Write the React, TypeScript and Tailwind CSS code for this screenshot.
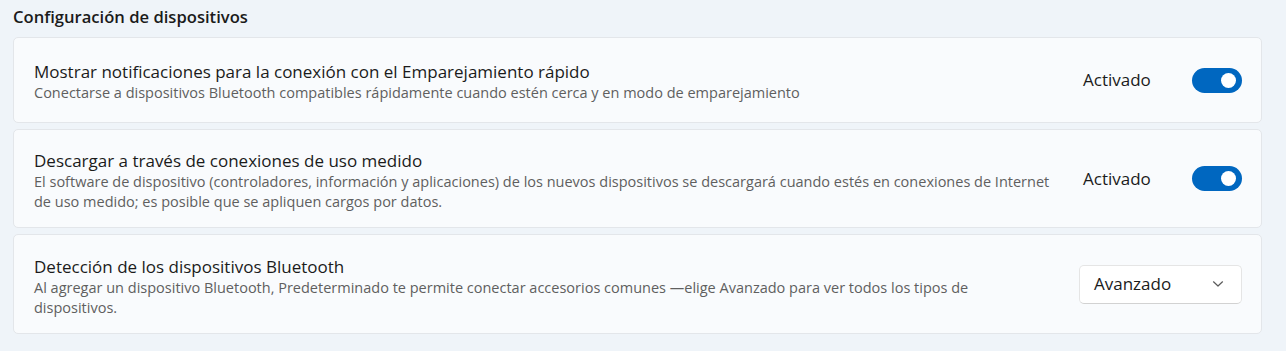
import React from 'react';

const Toggle: React.FC = () => (
    <div className="flex items-center justify-end w-[50px] h-[25px] rounded-full bg-[#0067c0] pr-[6px]">
        <div className="w-[15px] h-[15px] rounded-full bg-white" />
    </div>
);

const App: React.FC = () => {
    return (
        <div
            className="w-[1286px] h-[351px] bg-[#eff4f9] text-[#1b1b1b] px-[13px] pt-[5px]"
            style={{ fontFamily: '"Open Sans", "Noto Sans", sans-serif' }}
        >
            {/* Encabezado */}
            <h2 className="text-[16.6px] font-semibold leading-[23px] mb-[9px]">Configuración de dispositivos</h2>

            <div className="flex flex-col gap-[6px] w-[1249px]">
                {/* Emparejamiento rápido */}
                <div className="flex items-center h-[86px] rounded-[5px] border border-[#e3e6ea] bg-[#f9fbfd] pl-[20px] pr-[19px] pt-[3px]">
                    <div className="flex-1 pr-[27px]">
                        <div className="text-[17px] leading-[23px]">Mostrar notificaciones para la conexión con el Emparejamiento rápido</div>
                        <div className="text-[14.5px] leading-[20px] text-[#5f5f5f]">
                            Conectarse a dispositivos Bluetooth compatibles rápidamente cuando estén cerca y en modo de emparejamiento
                        </div>
                    </div>
                    <div className="flex items-center justify-between w-[163px] pl-[4px] -mt-[3px]">
                        <span className="text-[17px]">Activado</span>
                        <Toggle />
                    </div>
                </div>

                {/* Conexiones de uso medido */}
                <div className="flex items-center h-[99px] rounded-[5px] border border-[#e3e6ea] bg-[#f9fbfd] pl-[20px] pr-[19px] pt-[3px]">
                    <div className="flex-1 pr-[27px]">
                        <div className="text-[17px] leading-[23px]">Descargar a través de conexiones de uso medido</div>
                        <div className="text-[14.5px] leading-[20px] text-[#5f5f5f]">
                            El software de dispositivo (controladores, información y aplicaciones) de los nuevos dispositivos se descargará cuando estés en conexiones de Internet de uso medido; es posible que se apliquen cargos por datos.
                        </div>
                    </div>
                    <div className="flex items-center justify-between w-[163px] pl-[4px] -mt-[3px]">
                        <span className="text-[17px]">Activado</span>
                        <Toggle />
                    </div>
                </div>

                {/* Detección Bluetooth */}
                <div className="flex items-center h-[100px] rounded-[5px] border border-[#e3e6ea] bg-[#f9fbfd] pl-[20px] pr-[19px] pt-[4px]">
                    <div className="flex-1 pr-[27px]">
                        <div className="text-[17px] leading-[23px]">Detección de los dispositivos Bluetooth</div>
                        <div className="text-[14.5px] leading-[20px] text-[#5f5f5f]">
                            Al agregar un dispositivo Bluetooth, Predeterminado te permite conectar accesorios comunes —elige Avanzado para ver todos los tipos de dispositivos.
                        </div>
                    </div>
                    <div className="flex items-center justify-between w-[163px] h-[39px] rounded-[5px] border border-[#e5e5e5] border-b-[#d2d2d2] bg-white pl-[14px] pr-[17px] -mt-[4px]">
                        <span className="text-[17px]">Avanzado</span>
                        <svg width="12" height="8" viewBox="0 0 12 8" fill="none">
                            <path d="M1.5 1.8 L6 6 L10.5 1.8" stroke="#5a5a5a" strokeWidth="1.2" strokeLinecap="round" strokeLinejoin="round" />
                        </svg>
                    </div>
                </div>
            </div>
        </div>
    );
};

export default App;
